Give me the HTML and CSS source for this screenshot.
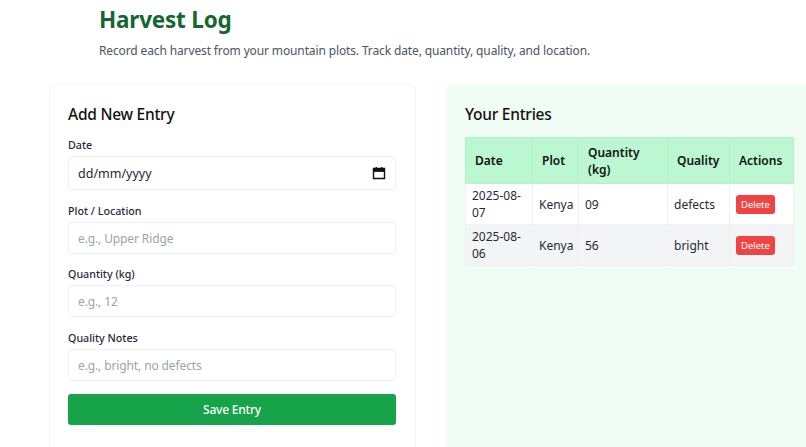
FILE: index.html
```html
<!DOCTYPE html>
<html>
<head>
  <meta charset="UTF-8">
  <title>Harvest Log</title>
  <link rel="stylesheet" href="styles.css">
</head>
<body>

<header class="page-head">
  <h1>Harvest Log</h1>
  <p>Record each harvest from your mountain plots. Track date, quantity, quality, and location.</p>
</header>

<div class="main-layout">

  <!-- form -->
  <section class="card">
    <h2>Add New Entry</h2>
    <div class="field">
      <label>Date</label>
      <div class="date-input">
        <span>dd/mm/yyyy</span>
        <svg width="14" height="14" viewBox="0 0 14 14"><path d="M1.5 2.5h11v10h-11z M1.5 5h11" fill="none" stroke="#111" stroke-width="1.4"/><path d="M1.5 2.5h11v3h-11z M3.5 1h1.4v2h-1.4z M9.1 1h1.4v2h-1.4z" fill="#111"/></svg>
      </div>
    </div>
    <div class="field">
      <label>Plot / Location</label>
      <input type="text" placeholder="e.g., Upper Ridge">
    </div>
    <div class="field tight">
      <label>Quantity (kg)</label>
      <input type="text" placeholder="e.g., 12">
    </div>
    <div class="field">
      <label>Quality Notes</label>
      <input type="text" placeholder="e.g., bright, no defects">
    </div>
    <button class="save-btn">Save Entry</button>
  </section>

  <!-- entries -->
  <section class="card entries">
    <h2>Your Entries</h2>
    <table>
      <thead>
        <tr>
          <th class="col-date">Date</th>
          <th class="col-plot">Plot</th>
          <th class="col-qty">Quantity (kg)</th>
          <th class="col-quality">Quality</th>
          <th class="col-actions">Actions</th>
        </tr>
      </thead>
      <tbody>
        <tr>
          <td>2025-08-07</td>
          <td>Kenya</td>
          <td>09</td>
          <td>defects</td>
          <td><button class="delete-btn">Delete</button></td>
        </tr>
        <tr>
          <td>2025-08-06</td>
          <td>Kenya</td>
          <td>56</td>
          <td>bright</td>
          <td><button class="delete-btn">Delete</button></td>
        </tr>
      </tbody>
    </table>
  </section>

</div>

</body>
</html>
```

FILE: styles.css
```css
html, body {
  height: 100%;
  overflow: hidden;
}
body {
  margin: 0;
  background: #fff;
  color: #111827;
  font-family: "Noto Sans", "Open Sans", sans-serif;
}
.page-head {
  padding: 3px 0 0 99px;
}
.page-head h1 {
  margin: 0;
  font-size: 22.5px;
  line-height: 34px;
  font-weight: 700;
  letter-spacing: -0.2px;
  color: #166534;
}
.page-head p {
  margin: 4px 0 0;
  font-size: 12px;
  line-height: 20px;
  letter-spacing: -0.13px;
  color: #4b5563;
}
.main-layout {
  display: grid;
  grid-template-columns: 367px 367px;
  gap: 30px;
  height: 363px;
  margin: 23px 0 0 49px;
  overflow: hidden;
}
.card {
  height: 400px;
  padding: 17px 18px;
  border: 1px solid #f3f4f6;
  border-radius: 6px;
  background: #fff;
}
.card h2 {
  margin: 0;
  font-size: 15.5px;
  line-height: 24px;
  font-weight: 500;
  letter-spacing: -0.25px;
  color: #111;
}
.entries {
  background: #f0fdf4;
  border-color: #f0fdf4;
}
.field {
  margin-top: 12px;
}
.field:first-of-type {
  margin-top: 10px;
}
.field.tight {
  margin-top: 11px;
}
label {
  display: block;
  margin-bottom: 2px;
  font-size: 10.7px;
  line-height: 18px;
  font-weight: 500;
  color: #1f2937;
}
input, .date-input {
  display: block;
  box-sizing: border-box;
  width: 328px;
  height: 32px;
  padding: 0 9px;
  border: 1px solid #eef0f3;
  border-radius: 4px;
  background: #fff;
  font-family: inherit;
  font-size: 12px;
  letter-spacing: -0.12px;
  color: #1f2937;
}
input::placeholder {
  color: #9ca3af;
}
.date-input {
  display: flex;
  align-items: center;
  justify-content: space-between;
  height: 34px;
  font-size: 12.5px;
  letter-spacing: 0;
}
.save-btn {
  display: block;
  width: 328px;
  height: 31px;
  margin-top: 13px;
  border: 0;
  border-radius: 3px;
  background: #16a34a;
  color: #fff;
  font-family: inherit;
  font-size: 12px;
  font-weight: 500;
  letter-spacing: -0.2px;
}
table {
  width: 328px;
  margin-top: 11px;
  border-collapse: collapse;
  table-layout: fixed;
  font-size: 12px;
  line-height: 17px;
  color: #1f2937;
}
th, td {
  box-sizing: border-box;
  border: 1px solid #eef0f3;
}
th {
  height: 46px;
  padding: 5.5px 5px 5.5px 9px;
  background: #bbf7d0;
  border-color: #b4f0c8;
  font-weight: 600;
  color: #111;
  text-align: left;
}
td {
  padding: 3px 6px;
  background: #fff;
  text-align: left;
}
tbody tr:nth-child(even) td {
  background: #f3f4f6;
}
.col-date { width: 67px; }
.col-plot { width: 46px; }
.col-qty { width: 89px; }
.col-quality { width: 62px; }
.col-actions { width: 64px; }
.delete-btn {
  display: block;
  padding: 0 5px;
  height: 19px;
  border: 0;
  border-radius: 3px;
  background: #ef4444;
  color: #fff;
  font-family: inherit;
  font-size: 9.5px;
}
```
